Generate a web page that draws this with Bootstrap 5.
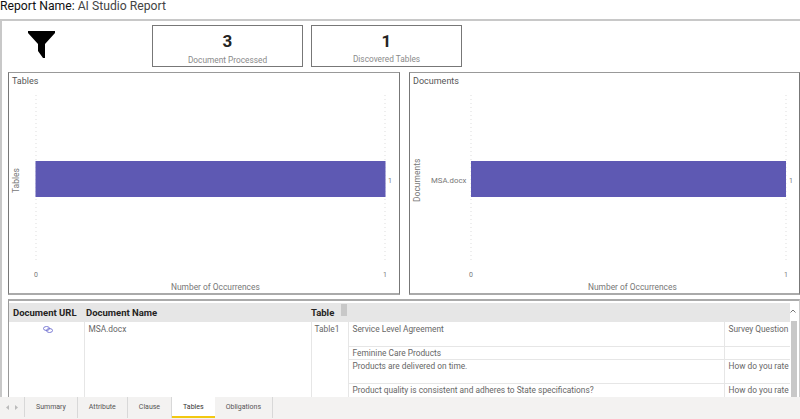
<!DOCTYPE html>
<html lang="en">
<head>
<meta charset="utf-8">
<title>AI Studio Report</title>
<link href="https://cdn.jsdelivr.net/npm/bootstrap@5.3.0/dist/css/bootstrap.min.css" rel="stylesheet">
<style>
html,body{height:419px;overflow:hidden;background:#fff}
body{width:800px;font-family:Roboto,"Noto Sans",sans-serif;color:#666;display:flex;flex-direction:column}
.rep-title{height:19px;line-height:13px;font-size:12.2px;color:#444;white-space:nowrap}
.rep-title b{font-weight:400;color:#111}
.rep-canvas{height:400px;border-top:2px solid #c8c8c8;border-left:2px solid #c8c8c8;padding:4px 0 0 6px;overflow:hidden;flex:none;display:flex;flex-direction:column}
.top-row{height:42px;flex:none}
.funnel-box{width:144px;padding:6px 0 0 20px}
.kpi{width:151px;height:42px;border:1px solid #777;text-align:center;background:#fff}
.kpi .num{font-size:17px;font-weight:700;line-height:17px;color:#252423;margin-top:7px}
.kpi .cap{font-size:8.3px;line-height:11px;color:#8a8a8a;margin-top:5px}
.kpi.second{margin-left:8px}
.kpi.second .cap{margin-top:4px}
.chart-row{height:223px;margin-top:5px;flex:none;gap:9px}
.chart-panel{height:223px;border:1px solid #777;border-top-color:#999;border-bottom:2px solid #aaa;background:#fff;flex:none;overflow:hidden}
.chart-panel.one{width:392px}
.chart-panel.two{width:391px}
.chart-panel svg{display:block}
.chart-panel text{font-family:Roboto,"Noto Sans",sans-serif;font-size:8px;fill:#777}
.chart-panel text.ttl{font-size:9px;fill:#555}
.grid-panel{margin-top:4px;height:99px;border-top:2px solid #aaa;border-left:1px solid #999;border-right:1px solid #ccc;padding:2px 0 0 0;overflow:hidden;flex:none;position:relative}
.data-grid{table-layout:fixed;width:781px;margin:0;font-size:8.33px;color:#666;border-collapse:collapse}
.data-grid th{background:#e6e6e6;color:#252423;font-weight:700;font-size:9.5px;height:19px;padding:0 0 0 2px;border:0;white-space:nowrap;line-height:19px}
.data-grid th:first-child{padding-left:4px}
.data-grid th.tbl-head{padding-left:0}
.data-grid td{padding:0 0 0 4px;border:0;vertical-align:top;line-height:12px;white-space:nowrap;overflow:hidden;background:#fff;color:#666}
.data-grid td.sep,.data-grid th.sep{border-left:1px solid #e6e6e6}
.data-grid tr.first td{padding-top:1px}
.data-grid .low td{border-bottom:1px solid #e6e6e6}
.data-grid .r-tall{height:24px}
.data-grid .r-short{height:12px}
.thumb-h{position:absolute;left:332px;top:3px;width:6px;height:12px;background:#c8c8c8}
.thumb-v{position:absolute;right:2px;top:20px;width:6px;height:76px;background:#c8c8c8}
.up-arrow{position:absolute;right:3px;top:8px}
.tabbar{position:absolute;left:0;bottom:0;height:22px;width:800px;background:#f3f2f1;font-size:7px;color:#555}
.tab-nav{width:25px;height:20px;border-right:1px solid #d8d8d8;color:#aaa;gap:6px}
.tab-item{height:21px;padding:0 11px;border-right:1px solid #d8d8d8;line-height:21px;white-space:nowrap}
.tab-item.active{background:#fff;border-bottom:2px solid #f2c811;color:#333;border-right:0;height:21px}
</style>
</head>
<body class="position-relative">
<div class="rep-title"><b>Report Name:</b> AI Studio Report</div>
<div class="rep-canvas">
  <div class="d-flex top-row">
    <div class="funnel-box">
      <svg width="28" height="28" viewBox="0 0 28 28"><path d="M0 0H27V2L17 13V27L15 27L10 20V13L0 2Z" fill="#000"/></svg>
    </div>
    <div class="kpi"><div class="num">3</div><div class="cap">Document Processed</div></div>
    <div class="kpi second"><div class="num">1</div><div class="cap">Discovered Tables</div></div>
  </div>
  <div class="d-flex chart-row">
    <div class="chart-panel one">
      <svg width="390" height="220" viewBox="0 0 390 220">
        <text class="ttl" x="3" y="11">Tables</text>
        <line x1="27" y1="22" x2="27" y2="190" stroke="#ddd" stroke-dasharray="1 3"/>
        <line x1="376" y1="22" x2="376" y2="190" stroke="#ddd" stroke-dasharray="1 3"/>
        <rect x="26.500" y="88" width="350" height="36" fill="#5e59b3"/>
        <text x="379" y="110" style="font-size:7px">1</text>
        <text x="25" y="204" style="font-size:7px">0</text>
        <text x="374" y="204" style="font-size:7px">1</text>
        <text x="162" y="217" style="font-size:8.4px">Number of Occurrences</text>
        <text transform="translate(10 120) rotate(-90)" style="font-size:8.5px">Tables</text>
      </svg>
    </div>
    <div class="chart-panel two">
      <svg width="389" height="220" viewBox="0 0 389 220">
        <text class="ttl" x="3" y="11">Documents</text>
        <line x1="61" y1="22" x2="61" y2="190" stroke="#ddd" stroke-dasharray="1 3"/>
        <line x1="376" y1="22" x2="376" y2="190" stroke="#ddd" stroke-dasharray="1 3"/>
        <rect x="61" y="88" width="315" height="36" fill="#5e59b3"/>
        <text x="21" y="110" style="font-size:7.8px">MSA.docx</text>
        <text x="379" y="110" style="font-size:7px">1</text>
        <text x="59" y="204" style="font-size:7px">0</text>
        <text x="374" y="204" style="font-size:7px">1</text>
        <text x="178" y="217" style="font-size:8.4px">Number of Occurrences</text>
        <text transform="translate(10 129) rotate(-90)" style="font-size:8.5px">Documents</text>
      </svg>
    </div>
  </div>
  <div class="grid-panel">
    <table class="table data-grid">
      <colgroup><col style="width:75px"><col style="width:227px"><col style="width:37px"><col style="width:376px"><col style="width:66px"></colgroup>
      <thead><tr><th>Document URL</th><th>Document Name</th><th class="tbl-head">Table</th><th></th><th class="sep"></th></tr></thead>
      <tbody>
        <tr class="first r-tall low">
          <td rowspan="4" class="text-center" style="padding-left:4px">
            <svg width="10" height="7" viewBox="0 0 10 7" fill="none" stroke="#6f6fd0" stroke-width=".9"><ellipse cx="3.500" cy="2.500" rx="3" ry="2"/><ellipse cx="6.500" cy="4.500" rx="3" ry="2"/></svg>
          </td>
          <td rowspan="4" class="sep" style="padding-top:1px">MSA.docx</td>
          <td rowspan="4" class="sep" style="padding-top:1px;padding-left:3px">Table1</td>
          <td class="sep">Service Level Agreement</td>
          <td class="sep">Survey Question</td>
        </tr>
        <tr class="r-short low"><td class="sep">Feminine Care Products</td><td class="sep"></td></tr>
        <tr class="r-tall low"><td class="sep">Products are delivered on time.</td><td class="sep">How do you rate</td></tr>
        <tr class="r-tall"><td class="sep">Product quality is consistent and adheres to State specifications?</td><td class="sep">How do you rate</td></tr>
      </tbody>
    </table>
    <div class="thumb-h"></div>
    <div class="thumb-v"></div>
    <svg class="up-arrow" width="6" height="4" viewBox="0 0 6 4" fill="none" stroke="#777"><path d="M.5 3.500L3 1L5.500 3.500"/></svg>
  </div>
</div>
<div class="tabbar d-flex">
  <div class="tab-nav d-flex align-items-center justify-content-center">
    <svg width="3" height="5" viewBox="0 0 3 5"><path d="M3 0V5L0 2.500Z" fill="#bbb"/></svg>
    <svg width="3" height="5" viewBox="0 0 3 5"><path d="M0 0V5L3 2.500Z" fill="#bbb"/></svg>
  </div>
  <div class="tab-item">Summary</div>
  <div class="tab-item">Attribute</div>
  <div class="tab-item">Clause</div>
  <div class="tab-item active">Tables</div>
  <div class="tab-item">Obligations</div>
</div>
<script src="https://cdn.jsdelivr.net/npm/bootstrap@5.3.0/dist/js/bootstrap.bundle.min.js"></script>
</body>
</html>
